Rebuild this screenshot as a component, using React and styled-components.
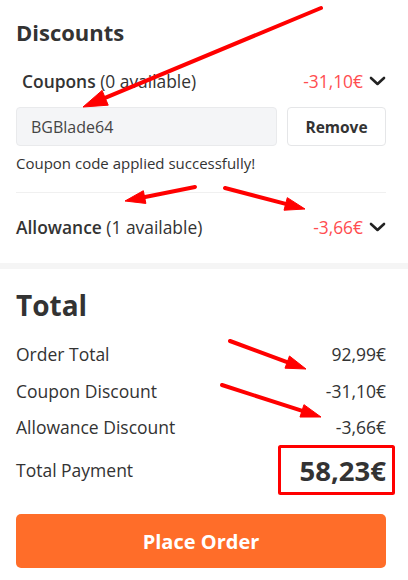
import React from "react";
import styled, { createGlobalStyle } from "styled-components";

const GlobalStyle = createGlobalStyle`
  html, body {
    margin: 0;
    padding: 0;
    background: #fff;
  }
  body {
    font-family: "Open Sans", "Liberation Sans", sans-serif;
    color: #333;
  }
`;

const Page = styled.div`
  position: relative;
  width: 408px;
  height: 580px;
  overflow: hidden;
  background: #fff;
`;

const Section = styled.section`
  padding: ${(p) => p.$pad || "0"};
  padding-left: 16px;
  padding-right: 22px;
`;

const Heading = styled.h2`
  margin: 0;
  font-size: ${(p) => p.$size || 22}px;
  line-height: ${(p) => (p.$size || 22) + 8}px;
  font-weight: 700;
  color: #333;
`;

const ToggleRow = styled.div`
  display: flex;
  align-items: center;
  justify-content: space-between;
  height: ${(p) => p.$h || 24}px;
  margin-top: ${(p) => p.$top || 0}px;
  padding-left: ${(p) => p.$indent || 0}px;
  font-size: 17.4px;
  color: #333;

  b {
    font-weight: 600;
  }
`;

const Amount = styled.span`
  display: flex;
  align-items: center;
  gap: 6px;
  color: #ff4d4f;
`;

const CouponForm = styled.div`
  display: flex;
  gap: 10px;
  margin-top: ${(p) => p.$top || 0}px;
`;

const CodeInput = styled.div`
  flex: 1;
  height: 37px;
  display: flex;
  align-items: center;
  padding-left: 14px;
  border: 1px solid #e9eaec;
  border-radius: 4px;
  background: #f4f5f7;
  font-size: 16px;
  color: #444;
`;

const RemoveButton = styled.button`
  width: 99px;
  height: 39px;
  border: 1px solid #e5e6e8;
  border-radius: 4px;
  background: #fff;
  font-family: inherit;
  font-size: 15.5px;
  font-weight: 700;
  color: #333;
`;

const Note = styled.p`
  margin: 7px 0 0;
  font-size: 15px;
  line-height: 20px;
  color: #333;
`;

const Divider = styled.hr`
  margin: 19px 0 0;
  border: 0;
  border-top: 1px solid #f0f0f0;
`;

const Band = styled.div`
  height: 6px;
  background: #f5f5f5;
`;

const Lines = styled.div`
  display: flex;
  flex-direction: column;
  margin-top: 13px;
`;

const Line = styled.div`
  display: flex;
  align-items: center;
  justify-content: space-between;
  height: ${(p) => p.$h || 36.5}px;
  font-size: 17.5px;
  color: #333;
`;

const BigValue = styled.span`
  font-size: 27.5px;
  font-weight: 700;
  color: #333;
`;

const PlaceOrder = styled.button`
  display: block;
  width: 100%;
  height: 54px;
  margin-top: 19.5px;
  border: 0;
  border-radius: 5px;
  background: #ff6d29;
  color: #fff;
  font-family: inherit;
  font-size: 20px;
  font-weight: 700;
`;

const Overlay = styled.svg`
  position: absolute;
  left: 0;
  top: 0;
  pointer-events: none;
`;

const Chevron = () => (
  <svg width="17" height="10" viewBox="0 0 17 10">
    <path d="M2 2l6.5 6 6.5-6" fill="none" stroke="#222" strokeWidth="2.6" strokeLinecap="round" strokeLinejoin="round" />
  </svg>
);

const Arrow = ({ x1, y1, x2, y2, len = 24, w = 16 }) => {
  const dx = x2 - x1;
  const dy = y2 - y1;
  const d = Math.hypot(dx, dy);
  const ux = dx / d;
  const uy = dy / d;
  const bx = x2 - ux * len;
  const by = y2 - uy * len;
  const px = -uy * (w / 2);
  const py = ux * (w / 2);
  return (
    <g fill="#f00" stroke="#f00">
      <line x1={x1} y1={y1} x2={bx + ux * 2} y2={by + uy * 2} strokeWidth="4" strokeLinecap="round" />
      <polygon points={`${x2},${y2} ${bx + px},${by + py} ${bx - px},${by - py}`} strokeWidth="1" />
    </g>
  );
};

const Annotations = () => (
  <Overlay width="408" height="580" viewBox="0 0 408 580">
    <Arrow x1={321} y1={8} x2={83} y2={107} />
    <Arrow x1={195} y1={187} x2={125} y2={201} len={20} w={13} />
    <Arrow x1={225} y1={188} x2={305} y2={209} len={20} w={13} />
    <Arrow x1={230} y1={341} x2={306} y2={369} len={20} w={13} />
    <Arrow x1={222} y1={385} x2={321} y2={417} len={20} w={13} />
    <rect x="279.5" y="446.5" width="114" height="47" fill="none" stroke="#f00" strokeWidth="3" rx="1" />
  </Overlay>
);

export default function App() {
  return (
    <Page>
      <GlobalStyle />
      <Section $pad="17px 0 2px">
        <Heading>Discounts</Heading>
        <ToggleRow $indent={6} $top={22}>
          <span>
            <b>Coupons</b> (0 available)
          </span>
          <Amount>
            -31,10€
            <Chevron />
          </Amount>
        </ToggleRow>
        <CouponForm $top={14}>
          <CodeInput>BGBlade64</CodeInput>
          <RemoveButton>Remove</RemoveButton>
        </CouponForm>
        <Note>Coupon code applied successfully!</Note>
        <Divider />
        <ToggleRow $h={68}>
          <span>
            <b>Allowance</b> (1 available)
          </span>
          <Amount>
            -3,66€
            <Chevron />
          </Amount>
        </ToggleRow>
      </Section>
      <Band />
      <Section $pad="18px 0 0">
        <Heading $size={28}>Total</Heading>
        <Lines>
          <Line>
            <span>Order Total</span>
            <span>92,99€</span>
          </Line>
          <Line>
            <span>Coupon Discount</span>
            <span>-31,10€</span>
          </Line>
          <Line>
            <span>Allowance Discount</span>
            <span>-3,66€</span>
          </Line>
          <Line $h={49}>
            <span>Total Payment</span>
            <BigValue>58,23€</BigValue>
          </Line>
        </Lines>
        <PlaceOrder>Place Order</PlaceOrder>
      </Section>
      <Annotations />
    </Page>
  );
}
